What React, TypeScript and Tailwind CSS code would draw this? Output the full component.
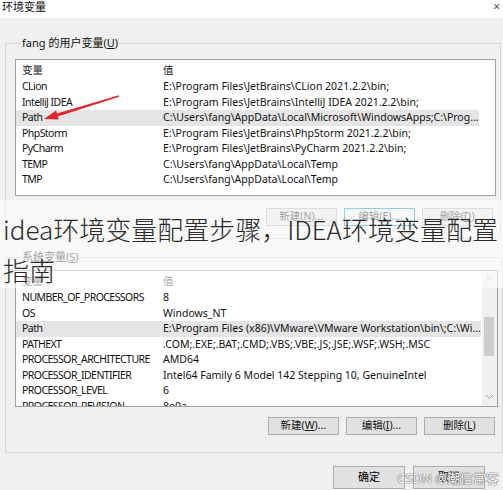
import React from 'react';

type Row = { name: string; value: string };

const userVars: Row[] = [
  { name: 'CLion', value: 'E:\\Program Files\\JetBrains\\CLion 2021.2.2\\bin;' },
  { name: 'IntelliJ IDEA', value: 'E:\\Program Files\\JetBrains\\IntelliJ IDEA 2021.2.2\\bin;' },
  { name: 'Path', value: 'C:\\Users\\fang\\AppData\\Local\\Microsoft\\WindowsApps;C:\\Prog...' },
  { name: 'PhpStorm', value: 'E:\\Program Files\\JetBrains\\PhpStorm 2021.2.2\\bin;' },
  { name: 'PyCharm', value: 'E:\\Program Files\\JetBrains\\PyCharm 2021.2.2\\bin;' },
  { name: 'TEMP', value: 'C:\\Users\\fang\\AppData\\Local\\Temp' },
  { name: 'TMP', value: 'C:\\Users\\fang\\AppData\\Local\\Temp' },
];

const systemVars: Row[] = [
  { name: 'NUMBER_OF_PROCESSORS', value: '8' },
  { name: 'OS', value: 'Windows_NT' },
  { name: 'Path', value: 'E:\\Program Files (x86)\\VMware\\VMware Workstation\\bin\\;C:\\Wi...' },
  { name: 'PATHEXT', value: '.COM;.EXE;.BAT;.CMD;.VBS;.VBE;.JS;.JSE;.WSF;.WSH;.MSC' },
  { name: 'PROCESSOR_ARCHITECTURE', value: 'AMD64' },
  { name: 'PROCESSOR_IDENTIFIER', value: 'Intel64 Family 6 Model 142 Stepping 10, GenuineIntel' },
  { name: 'PROCESSOR_LEVEL', value: '6' },
  { name: 'PROCESSOR_REVISION', value: '8e0a' },
];

function VarList({ rows, selected, scroll }: { rows: Row[]; selected: number; scroll?: boolean }) {
  return (
    <div className="relative h-[137px] border border-[#a0a0a0] bg-white overflow-hidden">
      <div className="pt-[3px] pr-[16px]">
        <div className="flex h-[16px] items-center text-[#222]">
          <span className="w-[147px] pl-[6px]">变量</span>
          <span>值</span>
        </div>
        {rows.map((r, i) => (
          <div
            key={r.name}
            className={`flex h-[15.6px] items-center whitespace-nowrap text-[#111] ${i === selected ? 'bg-[#e5e5e5]' : ''}`}
          >
            <span className="w-[147px] pl-[6px] shrink-0 tracking-[-0.55px]">{r.name}</span>
            <span>{r.value}</span>
          </div>
        ))}
      </div>
      {scroll && (
        <div className="absolute right-0 top-0 bottom-0 w-[15px] bg-[#f0f0f0] flex flex-col items-center">
          <svg width="9" height="6" viewBox="0 0 9 6" className="mt-[5px]">
            <path d="M1 5 L4.5 1.5 L8 5" stroke="#a0a0a0" fill="none" strokeWidth="1" />
          </svg>
          <div className="mt-[35px] w-[10px] h-[39px] bg-[#cdcdcd]" />
          <div className="flex-1" />
          <svg width="9" height="6" viewBox="0 0 9 6" className="mb-[6px]">
            <path d="M1 1 L4.5 4.5 L8 1" stroke="#a0a0a0" fill="none" strokeWidth="1" />
          </svg>
        </div>
      )}
    </div>
  );
}

function Btn({ label, hot, focused }: { label: string; hot: string; focused?: boolean }) {
  const [pre, post] = label.split(hot);
  return (
    <div
      className={`w-[71px] h-[18px] flex items-center justify-center border text-[#111] ${
        focused ? 'border-[#0078d7] bg-[#e5f1fb]' : 'border-[#adadad] bg-[#e1e1e1]'
      }`}
    >
      {pre}
      <u>{hot}</u>
      {post}
    </div>
  );
}

export default function App() {
  return (
    <div className="relative w-[503px] h-[490px] overflow-hidden bg-[#f0f0f0] text-[10.5px] font-['Noto_Sans','Noto_Sans_CJK_SC',sans-serif]">
      {/* title bar */}
      <div className="h-[18px] bg-white flex justify-between items-start pl-[2px] pr-[3px] text-[11px] leading-[14px] text-[#111]">
        <span>环境变量</span>
        <span className="text-[12px] leading-[14px] text-[#555]">×</span>
      </div>

      <div className="px-[5px]">
        {/* user variables */}
        <fieldset className="mt-[17px] border border-[#d5d5d5] pl-[9px] pr-[4px] pb-[12px]">
          <legend className="ml-[6px] px-[1px] text-[11px] leading-[16px] text-[#111]">
            fang 的用户变量(<u>U</u>)
          </legend>
          <div className="mt-[8px]">
            <VarList rows={userVars} selected={2} />
          </div>
          <div className="mt-[12px] flex justify-end gap-[7px] pr-[3px]">
            <Btn label="新建(N)..." hot="N" />
            <Btn label="编辑(E)..." hot="E" focused />
            <Btn label="删除(D)" hot="D" />
          </div>
        </fieldset>

        {/* system variables */}
        <fieldset className="mt-[10px] border border-[#d5d5d5] pl-[9px] pr-[4px] pb-[17px]">
          <legend className="ml-[6px] px-[1px] text-[11px] leading-[16px] text-[#111]">
            系统变量(<u>S</u>)
          </legend>
          <div className="mt-[5px]">
            <VarList rows={systemVars} selected={2} scroll />
          </div>
          <div className="mt-[10px] flex justify-end gap-[7px] pr-[3px]">
            <Btn label="新建(W)..." hot="W" />
            <Btn label="编辑(I)..." hot="I" />
            <Btn label="删除(L)" hot="L" />
          </div>
        </fieldset>

        <div className="mt-[13px] flex justify-end gap-[8px] pr-[13px]">
          <div className="w-[72px] h-[23px] flex items-center justify-center border border-[#adadad] bg-[#e1e1e1] text-[11px]">确定</div>
          <div className="w-[72px] h-[23px] flex items-center justify-center border border-[#adadad] bg-[#e1e1e1] text-[11px]">取消</div>
        </div>
      </div>

      {/* red annotation arrow */}
      <svg className="absolute left-0 top-0 pointer-events-none" width="503" height="490">
        <polygon
          points="118.9,95.3 57,113.4 56.1,110.4 44,119 58.7,119.4 57.8,116.4 119.1,96.7"
          fill="#e3262b"
        />
      </svg>

      {/* article title overlay */}
      <div className="absolute left-0 right-0 top-[200px] h-[88px] bg-white/60 pt-[8px] pl-[3px] text-[26px] leading-[41px] text-[#2a2a2a] font-['Noto_Sans_CJK_SC',sans-serif] font-light">
        <div className="whitespace-nowrap">idea环境变量配置步骤，IDEA环境变量配置</div>
        <div>指南</div>
      </div>

      {/* watermark */}
      <div className="absolute right-[4px] bottom-[2px] text-[13px] text-white [text-shadow:0_0_1px_#444,0_0_1px_#444] font-['Noto_Sans','Noto_Sans_CJK_SC',sans-serif]">
        CSDN @潮信常客
      </div>
    </div>
  );
}
